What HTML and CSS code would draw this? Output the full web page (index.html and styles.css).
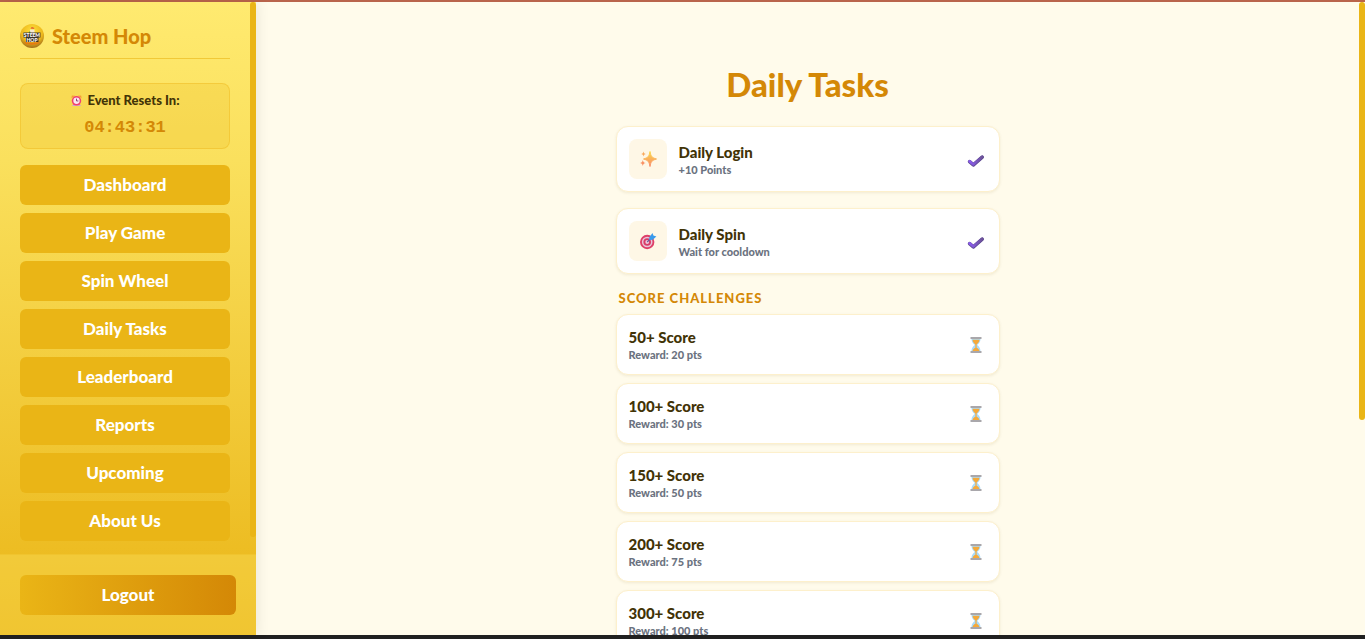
FILE: index.html
```html
<!DOCTYPE html>
<html lang="en">
<head>
    <meta charset="UTF-8">
    <meta name="viewport" content="width=device-width, initial-scale=1.0">
    <title>Steem Hop - Daily Tasks</title>
    <link rel="stylesheet" href="styles.css">
</head>
<body>
    <svg class="sprite" aria-hidden="true">
        <defs>
            <linearGradient id="gold" x1="0" y1="0" x2="0" y2="1">
                <stop offset="0" stop-color="#fbd94a"/>
                <stop offset="1" stop-color="#f98a6a"/>
            </linearGradient>
            <linearGradient id="purple" x1="0" y1="0" x2="1" y2="0">
                <stop offset="0" stop-color="#8b5cf0"/>
                <stop offset="1" stop-color="#6d5299"/>
            </linearGradient>
            <radialGradient id="coin" cx="0.5" cy="0.3" r="0.75">
                <stop offset="0" stop-color="#ffe23d"/>
                <stop offset="0.6" stop-color="#edb81c"/>
                <stop offset="1" stop-color="#93601a"/>
            </radialGradient>
        </defs>
        <symbol id="check" viewBox="0 0 18 18">
            <path d="M2.600 11.600 6.400 14.800 15.200 7.200" fill="none" stroke="#57438c" stroke-width="3.600" stroke-linecap="round" stroke-linejoin="round"/>
            <path d="M2.600 11.300 6.400 14.500 15.200 6.900" fill="none" stroke="url(#purple)" stroke-width="2.600" stroke-linecap="round" stroke-linejoin="round"/>
        </symbol>
        <symbol id="hourglass" viewBox="0 0 18 18">
            <path d="M4.500 2h9c0 4-1.200 5.300-3.300 7 2.100 1.700 3.300 3 3.300 7h-9c0-4 1.200-5.300 3.300-7C5.700 7.300 4.500 6 4.500 2z" fill="#a9dcfb"/>
            <path d="M5.500 3.800h7c-.2 2.300-1.500 3.500-2.900 4.700v3.200c1.500.8 2.500 1.600 2.900 3.300h-7c.4-1.700 1.400-2.500 2.900-3.300V8.500C7 7.300 5.700 6.100 5.500 3.800z" fill="#f5a93a"/>
            <path d="M3.500 1h11v2h-11zM3.500 15h11v2h-11z" fill="#a9a7ab"/>
        </symbol>
    </svg>
    <div class="strip-top"></div>
    <div class="layout">
        <aside class="sidebar">
            <div class="sidebar-body">
                <div class="sidebar-scroll">
                    <div class="brand">
                        <svg class="brand-logo" viewBox="0 0 24 24" aria-hidden="true">
                            <circle cx="12" cy="12" r="12" fill="url(#coin)"/>
                            <path d="M10 5.500h4.500V9H10z" fill="#f5ead2"/>
                            <path d="M10.500 4.500c1-1.500 2-2 2.500-.5.500-1 1.500-.5 1.200.8z" fill="#e04a32"/>
                            <path d="M10 7l-1.500 2h2z" fill="#4f9b38"/>
                            <path d="M3.500 8.500h17v5h-2V18H6v-4.500H3.500z" fill="#3b3428"/>
                            <path d="M4 17.500c4 1.600 12 1.600 16 0l-1.500 2.200c-4 1.300-9 1.300-13 0z" fill="#e57a10"/>
                            <text x="12" y="13" class="logo-text">STEEM</text>
                            <text x="12" y="17.500" class="logo-text">HOP</text>
                        </svg>
                        <span class="brand-name">Steem Hop</span>
                    </div>
                    <div class="timer">
                        <div class="timer-label">
                            <svg class="timer-icon" viewBox="0 0 14 14" aria-hidden="true">
                                <path d="M1.500 4.500 2 1.500 5.500 2zM12.500 4.500 12 1.500 8.500 2z" fill="#f59a35"/>
                                <path d="M3 11.500h8l1 1.500H2z" fill="#d3a6cf"/>
                                <circle cx="7" cy="7.300" r="5.100" fill="#f0406f"/>
                                <circle cx="7" cy="7.300" r="3.400" fill="#fbe8f2"/>
                                <path d="M7 5v2.500h2" fill="none" stroke="#873a68"/>
                            </svg>
                            Event Resets In:
                        </div>
                        <div class="timer-value">04:43:31</div>
                    </div>
                    <nav class="menu">
                        <button class="btn">Dashboard</button>
                        <button class="btn">Play Game</button>
                        <button class="btn">Spin Wheel</button>
                        <button class="btn">Daily Tasks</button>
                        <button class="btn">Leaderboard</button>
                        <button class="btn">Reports</button>
                        <button class="btn">Upcoming</button>
                        <button class="btn">About Us</button>
                    </nav>
                </div>
                <div class="scrollbar"><div class="thumb thumb-sidebar"></div></div>
            </div>
            <div class="sidebar-footer">
                <button class="btn btn-logout">Logout</button>
            </div>
        </aside>

        <main class="content">
            <div class="tasks">
                <h1>Daily Tasks</h1>
                <div class="card card-daily">
                    <div class="card-icon">
                        <svg viewBox="0 0 18 18" aria-hidden="true">
                            <path d="M11 1.500c.8 4.500 1.800 6.200 6.500 7.500-4.700 1.300-5.700 3-6.500 7.500-.8-4.500-1.800-6.200-6.500-7.500C9.200 7.700 10.200 6 11 1.500z" fill="url(#gold)" stroke="url(#gold)" stroke-linejoin="round"/>
                            <path d="M4.500 1.500c.4 1.700.8 2.100 2.500 2.500-1.700.4-2.100.8-2.500 2.500C4.100 4.800 3.700 4.400 2 4c1.700-.4 2.100-.8 2.500-2.500z" fill="#f9a95c"/>
                            <path d="M3.800 10c.4 2 1 2.600 3 3-2 .4-2.600 1-3 3-.4-2-1-2.600-3-3 2-.4 2.600-1 3-3z" fill="#f99264"/>
                        </svg>
                    </div>
                    <div class="card-text">
                        <div class="card-title">Daily Login</div>
                        <div class="card-sub">+10 Points</div>
                    </div>
                    <svg class="status" role="img" aria-label="Done"><use href="#check"/></svg>
                </div>
                <div class="card card-daily">
                    <div class="card-icon">
                        <svg viewBox="0 0 18 18" aria-hidden="true">
                            <circle cx="8.200" cy="10" r="7.200" fill="#de3f68"/>
                            <circle cx="8.200" cy="10" r="5.300" fill="#e8c4d8"/>
                            <circle cx="8.200" cy="10" r="3.800" fill="#d83c68"/>
                            <circle cx="8.200" cy="10" r="1.900" fill="#f0c9dc"/>
                            <path d="M8.200 10 13 5.200" stroke="#6b5c9b" stroke-width="1.200"/>
                            <path d="M10.500 5 13.500 1l.9 2.600 3 .8-3.600 3.400-3.600.3z" fill="#3a9bec"/>
                        </svg>
                    </div>
                    <div class="card-text">
                        <div class="card-title">Daily Spin</div>
                        <div class="card-sub">Wait for cooldown</div>
                    </div>
                    <svg class="status" role="img" aria-label="Done"><use href="#check"/></svg>
                </div>

                <h2>Score Challenges</h2>
                <div class="challenges">
                    <div class="card">
                        <div class="card-text">
                            <div class="card-title">50+ Score</div>
                            <div class="card-sub">Reward: 20 pts</div>
                        </div>
                        <svg class="status" role="img" aria-label="Pending"><use href="#hourglass"/></svg>
                    </div>
                    <div class="card">
                        <div class="card-text">
                            <div class="card-title">100+ Score</div>
                            <div class="card-sub">Reward: 30 pts</div>
                        </div>
                        <svg class="status" role="img" aria-label="Pending"><use href="#hourglass"/></svg>
                    </div>
                    <div class="card">
                        <div class="card-text">
                            <div class="card-title">150+ Score</div>
                            <div class="card-sub">Reward: 50 pts</div>
                        </div>
                        <svg class="status" role="img" aria-label="Pending"><use href="#hourglass"/></svg>
                    </div>
                    <div class="card">
                        <div class="card-text">
                            <div class="card-title">200+ Score</div>
                            <div class="card-sub">Reward: 75 pts</div>
                        </div>
                        <svg class="status" role="img" aria-label="Pending"><use href="#hourglass"/></svg>
                    </div>
                    <div class="card">
                        <div class="card-text">
                            <div class="card-title">300+ Score</div>
                            <div class="card-sub">Reward: 100 pts</div>
                        </div>
                        <svg class="status" role="img" aria-label="Pending"><use href="#hourglass"/></svg>
                    </div>
                </div>
            </div>
        </main>
        <div class="scrollbar"><div class="thumb thumb-main"></div></div>
    </div>
    <div class="strip-bottom"></div>
</body>
</html>
```
FILE: styles.css
```css
* {
    box-sizing: border-box;
}
body {
    margin: 0;
    height: 100vh;
    display: flex;
    flex-direction: column;
    font-family: Lato, sans-serif;
    font-weight: 900;
    color: #423306;
    background-color: #fffbeb;
}
.sprite {
    position: absolute;
    width: 0;
    height: 0;
}
.strip-top {
    height: 2px;
    flex-shrink: 0;
    background-color: #b9644b;
}
.strip-bottom {
    height: 4px;
    flex-shrink: 0;
    background-color: #202020;
}
.layout {
    flex: 1;
    min-height: 0;
    display: flex;
}

/* Scrollbars */
.sidebar-scroll, .content {
    overflow-y: auto;
    scrollbar-width: none;
}
.scrollbar {
    width: 6px;
    flex-shrink: 0;
}
.thumb {
    background-color: #eab516;
    border-radius: 3px;
}
.thumb-sidebar {
    height: 97%;
}
.thumb-main {
    height: 66%;
}

/* Sidebar */
.sidebar {
    width: 256px;
    flex-shrink: 0;
    display: flex;
    flex-direction: column;
    background: linear-gradient(180deg, #ffea70, #fae05d 25%, #eab516);
    box-shadow: 2px 0 12px rgba(0, 0, 0, 0.08);
    z-index: 1;
}
.sidebar-body {
    flex: 1;
    min-height: 0;
    display: flex;
}
.sidebar-scroll {
    flex: 1;
    padding: 20px;
}
.brand {
    display: flex;
    align-items: center;
    gap: 8px;
    height: 37px;
    padding-bottom: 9px;
    border-bottom: 1px solid rgba(234, 181, 22, 0.6);
    margin-bottom: 24px;
}
.brand-logo {
    width: 24px;
    height: 24px;
}
.logo-text {
    font-size: 5px;
    fill: #fff;
    text-anchor: middle;
}
.brand-name {
    font-size: 20px;
    line-height: 28px;
    color: #d48806;
}
.timer {
    padding: 8px;
    margin-bottom: 16px;
    text-align: center;
    background-color: rgba(234, 181, 22, 0.2);
    border: 1px solid rgba(234, 181, 22, 0.4);
    border-radius: 8px;
}
.timer-label {
    display: flex;
    align-items: center;
    justify-content: center;
    gap: 4px;
    font-size: 13px;
    line-height: 16px;
    margin-bottom: 8px;
}
.timer-icon {
    width: 13px;
    height: 13px;
}
.timer-value {
    font-family: "Liberation Mono", monospace;
    font-weight: bold;
    font-size: 17px;
    line-height: 24px;
    color: #d48806;
}
.menu {
    display: flex;
    flex-direction: column;
    gap: 8px;
    padding-bottom: 8px;
}
.btn {
    height: 40px;
    flex-shrink: 0;
    width: 100%;
    padding: 0 8px 2px;
    border: none;
    border-radius: 6px;
    background-color: #eab516;
    color: #fff;
    font: inherit;
    font-size: 17px;
    cursor: pointer;
}
.sidebar-footer {
    padding: 20px;
    background-color: rgba(255, 234, 112, 0.3);
    border-top: 1px solid rgba(234, 181, 22, 0.3);
}
.btn-logout {
    display: block;
    background: linear-gradient(90deg, #eab516, #d48806);
}

/* Main content */
.content {
    flex: 1;
    padding: 64px 16px 300px;
}
.tasks {
    max-width: 384px;
    margin: 0 auto;
}
h1 {
    margin: 0 0 24px;
    font-size: 33px;
    line-height: 36px;
    font-weight: 900;
    text-align: center;
    color: #d48806;
}
.card {
    display: flex;
    align-items: center;
    gap: 12px;
    padding: 12px;
    background-color: #fff;
    border: 1px solid #fdf0cc;
    border-radius: 12px;
    box-shadow: 0 1px 3px rgba(120, 90, 0, 0.1);
}
.card-daily {
    margin-bottom: 16px;
}
.card-icon {
    display: flex;
    align-items: center;
    justify-content: center;
    width: 38px;
    height: 40px;
    border-radius: 8px;
    background-color: #fef7e6;
}
.card-icon svg {
    width: 18px;
    height: 18px;
}
.card-text {
    flex: 1;
}
.card-title {
    font-size: 15px;
    line-height: 20px;
}
.card-sub {
    font-size: 11px;
    line-height: 15px;
    color: #6b7280;
}
.status {
    width: 18px;
    height: 18px;
    margin-right: 2px;
}
h2 {
    margin: 0 0 8px;
    padding: 0 3px;
    font-size: 13px;
    line-height: 16px;
    font-weight: 900;
    letter-spacing: 1px;
    text-transform: uppercase;
    color: #d48806;
}
.challenges {
    display: flex;
    flex-direction: column;
    gap: 8px;
}
```
